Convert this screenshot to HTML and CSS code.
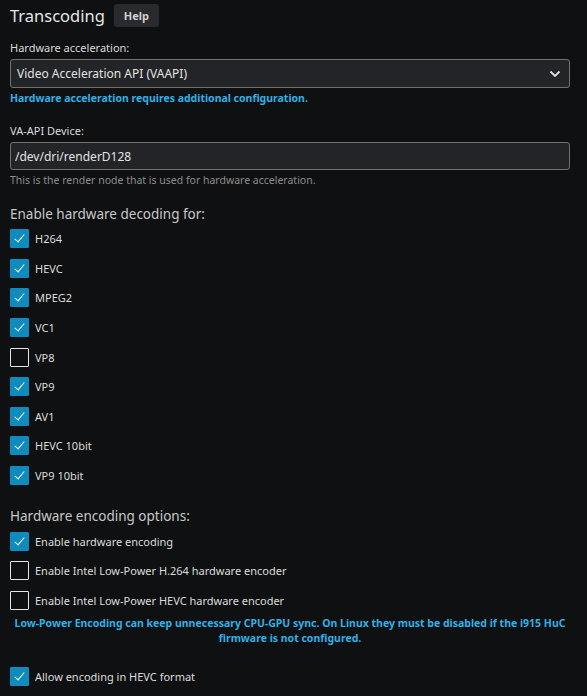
FILE: index.html
```html
<!DOCTYPE html>
<html lang="en">
<head>
    <meta charset="UTF-8">
    <title>Transcoding</title>
    <link rel="stylesheet" href="styles.css">
</head>
<body>
    <div id="page">
        <div class="section-title">
            <h2>Transcoding</h2>
            <a class="btn-help">Help</a>
        </div>

        <div class="field">
            <label class="field-label">Hardware acceleration:</label>
            <div class="select-box">
                <span>Video Acceleration API (VAAPI)</span>
                <svg class="chevron" width="12" height="8" viewBox="0 0 12 8"><path d="M1.5 1.5 L6 6 L10.5 1.5" fill="none" stroke="#e0e0e0" stroke-width="1.8"/></svg>
            </div>
            <p class="note-blue">Hardware acceleration requires additional configuration.</p>
        </div>

        <div class="field">
            <label class="field-label">VA-API Device:</label>
            <div class="input-box">/dev/dri/renderD128</div>
            <p class="field-desc">This is the render node that is used for hardware acceleration.</p>
        </div>

        <h3 class="group-title">Enable hardware decoding for:</h3>
        <div class="checks">
            <label class="check on"><span class="box"></span>H264</label>
            <label class="check on"><span class="box"></span>HEVC</label>
            <label class="check on"><span class="box"></span>MPEG2</label>
            <label class="check on"><span class="box"></span>VC1</label>
            <label class="check"><span class="box"></span>VP8</label>
            <label class="check on"><span class="box"></span>VP9</label>
            <label class="check on"><span class="box"></span>AV1</label>
            <label class="check on"><span class="box"></span>HEVC 10bit</label>
            <label class="check on"><span class="box"></span>VP9 10bit</label>
        </div>

        <h3 class="group-title second">Hardware encoding options:</h3>
        <div class="checks">
            <label class="check on"><span class="box"></span>Enable hardware encoding</label>
            <label class="check"><span class="box"></span>Enable Intel Low-Power H.264 hardware encoder</label>
            <label class="check"><span class="box"></span>Enable Intel Low-Power HEVC hardware encoder</label>
        </div>
        <p class="note-blue center">Low-Power Encoding can keep unnecessary CPU-GPU sync. On Linux they must be disabled if the i915 HuC firmware is not configured.</p>

        <div class="checks last">
            <label class="check on"><span class="box"></span>Allow encoding in HEVC format</label>
        </div>
    </div>
</body>
</html>
```

FILE: styles.css
```css
*{
    padding: 0;
    margin: 0;
    box-sizing: border-box;
    font-family: "Noto Sans", sans-serif;
}
body{
    background: #0f1012;
    color: #dddddd;
    overflow: hidden;
}
#page{
    display: flex;
    flex-direction: column;
    padding: 4px 17px 0 10px;
}
.section-title{
    display: flex;
    align-items: center;
    gap: 9px;
}
.section-title h2{
    font-size: 16.5px;
    font-weight: normal;
    color: #e6e6e6;
}
.btn-help{
    background: #292a2d;
    color: #d0d0d0;
    font-size: 11px;
    font-weight: bold;
    padding: 4px 10px;
    border-radius: 3px;
}
.field{
    display: flex;
    flex-direction: column;
}
.field-label{
    font-size: 11px;
    color: #dadada;
    margin-top: 13px;
    margin-bottom: 4px;
}
.select-box, .input-box{
    display: flex;
    align-items: center;
    justify-content: space-between;
    height: 29px;
    padding: 0 8px 0 6px;
    background: #232427;
    border: 1px solid #77706a;
    border-radius: 3px;
    font-size: 12px;
    color: #e2e2e2;
}
.input-box{
    height: 28px;
    padding-left: 4px;
}
.note-blue{
    font-size: 10.5px;
    font-weight: bold;
    color: #2fb0e6;
    margin-top: 3px;
    margin-bottom: 5px;
}
.note-blue.center{
    text-align: center;
    line-height: 15px;
    padding: 0 4px;
    margin-top: 1px;
    margin-bottom: 16px;
}
.field-desc{
    font-size: 10.5px;
    color: #8c8c8c;
    margin-top: 3px;
}
.group-title{
    font-size: 13.5px;
    font-weight: normal;
    color: #c8c8c8;
    margin-top: 18px;
    margin-bottom: 1px;
}
.group-title.second{
    margin-top: 17px;
}
.checks{
    display: flex;
    flex-direction: column;
}
.check{
    display: flex;
    align-items: center;
    gap: 6px;
    height: 29.6px;
    font-size: 11px;
    color: #dcdcdc;
}
.check .box{
    width: 19px;
    height: 19px;
    border: 1px solid #e6e6e6;
    border-radius: 1px;
    position: relative;
}
.check.on .box{
    background: #0f8bbd;
    border-color: #0f8bbd;
}
.check.on .box::after{
    content: "";
    position: absolute;
    left: 6px;
    top: 2px;
    width: 4px;
    height: 9px;
    border: solid #ffffff;
    border-width: 0 1.5px 1.5px 0;
    transform: rotate(40deg);
}
```
